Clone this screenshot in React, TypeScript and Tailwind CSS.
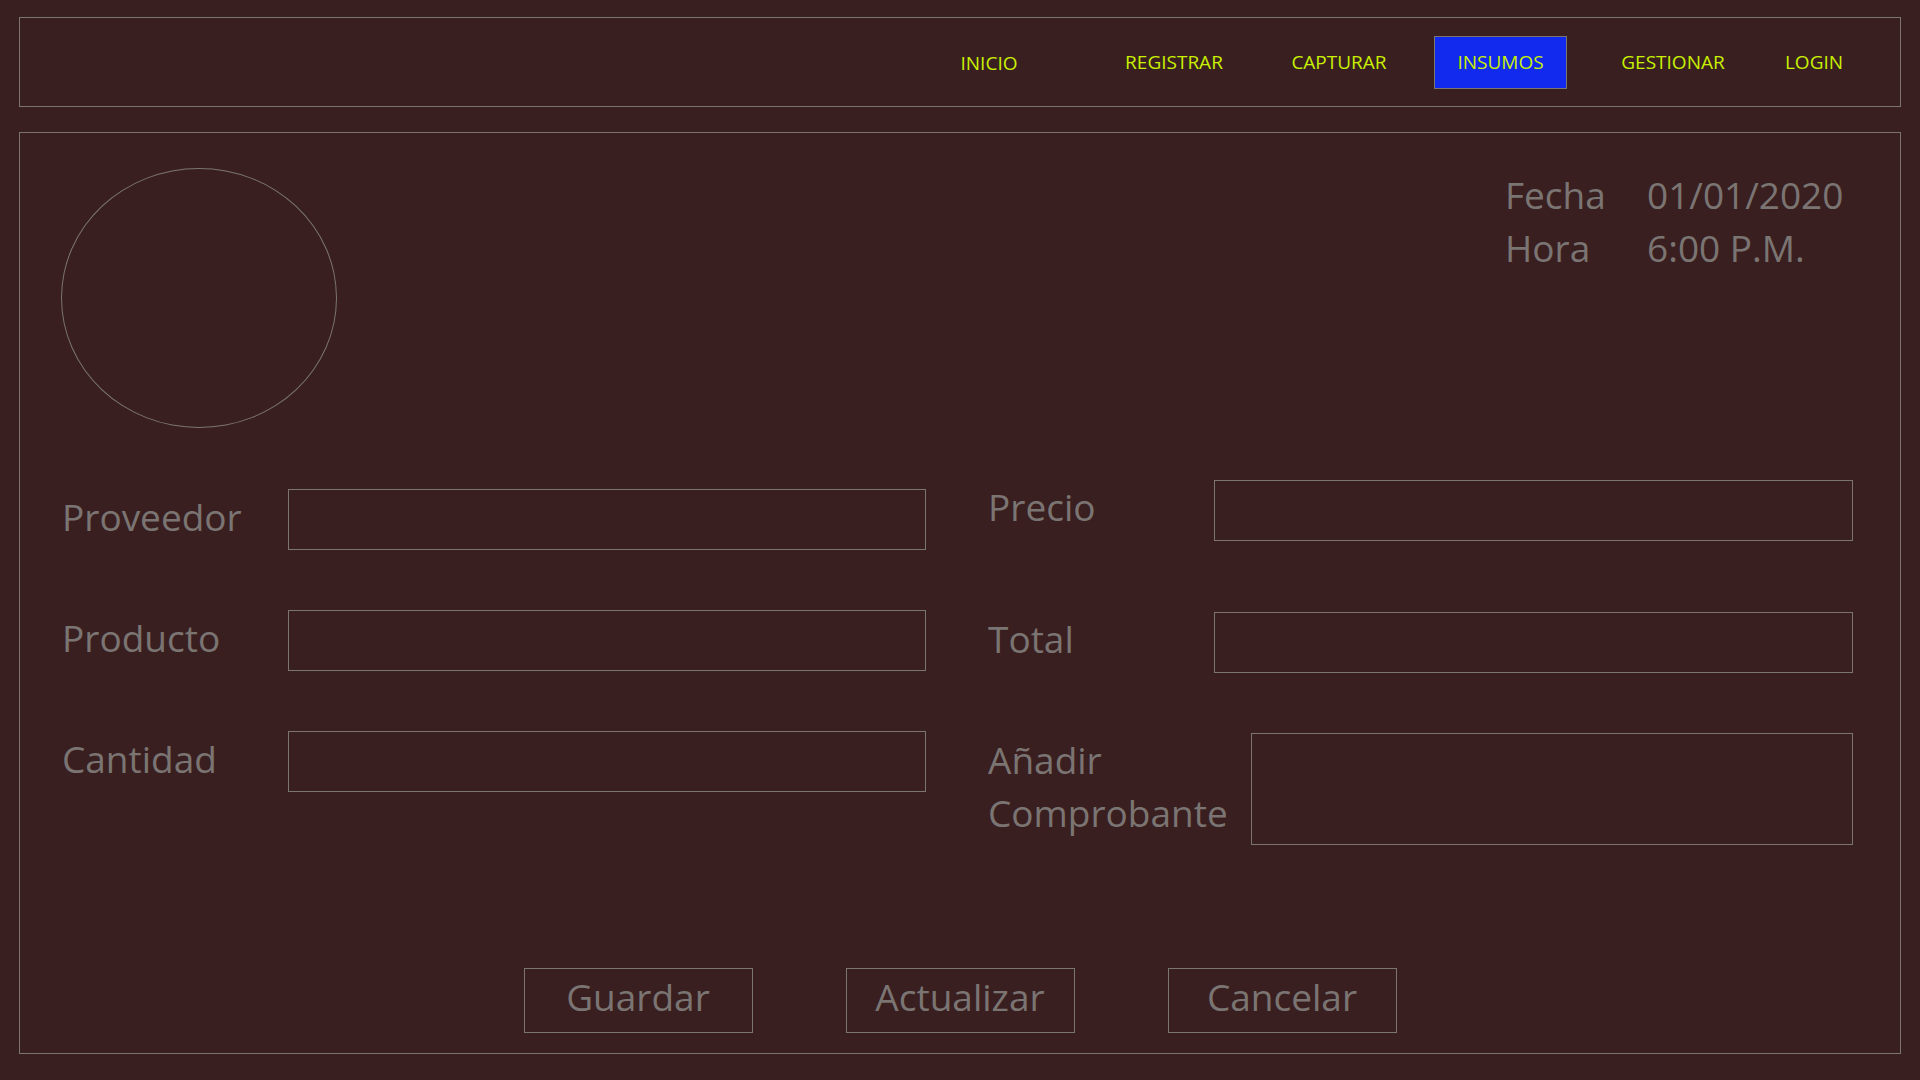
import { useState } from "react";

const NAV = ["INICIO", "REGISTRAR", "CAPTURAR", "INSUMOS", "GESTIONAR", "LOGIN"];

// gap before each nav item (px), kept as full class names for tailwind
const navGap: Record<string, string> = {
  INICIO: "",
  REGISTRAR: "ml-[45px]",
  CAPTURAR: "ml-[25px]",
  INSUMOS: "ml-[25px]",
  GESTIONAR: "ml-[36px]",
  LOGIN: "ml-[1px]",
};

function Field({ label, top }: { label: string; top?: boolean }) {
  return (
    <div className={`flex ${top ? "items-start" : "items-center"}`}>
      <label
        className={`w-[228px] shrink-0 pl-[2px] leading-[53px] ${top ? "" : "mb-[6px]"}`}
      >
        {label}
      </label>
      <input
        type="text"
        className="h-[61px] flex-1 border border-[#7a7573] bg-transparent px-3 text-[28px] text-[#7a7573] outline-none"
      />
    </div>
  );
}

export default function App() {
  const [active] = useState("INSUMOS");

  return (
    <div
      className="min-h-screen bg-[#3a1f20] px-[19px] pt-[17px] text-[#7a7573]"
      style={{ fontFamily: '"Open Sans", "Noto Sans", sans-serif' }}
    >
      {/* header / nav */}
      <header className="flex h-[90px] items-center justify-end border border-[#7a7573] pr-[16px]">
        {NAV.map((item) =>
          item === active ? (
            <span
              key={item}
              className={`${navGap[item]} flex h-[53px] w-[133px] items-center justify-center border border-[#7a7573] bg-[#1229ee] text-[19px] text-[#c8f000]`}
            >
              {item}
            </span>
          ) : (
            <span
              key={item}
              className={`${navGap[item]} w-[140px] text-center text-[19px] text-[#c8f000] ${item === "INICIO" ? "mt-[2px]" : ""}`}
            >
              {item}
            </span>
          )
        )}
      </header>

      {/* main panel */}
      <main className="mt-[25px] flex h-[922px] flex-col border border-[#7a7573] pl-[40px] pr-[47px] pt-[35px] text-[37px]">
        <div className="flex items-start justify-between">
          <div className="ml-[1px] h-[260px] w-[276px] rounded-[50%] border border-[#7a7573]" />
          <div className="-mr-[4px] grid grid-cols-[142px_210px] leading-[53px]">
            <span>Fecha</span>
            <span>01/01/2020</span>
            <span>Hora</span>
            <span>6:00 P.M.</span>
          </div>
        </div>

        <div className="mt-[52px] flex gap-[60px]">
          <div className="mt-[9px] flex w-[866px] flex-col gap-[60px]">
            <Field label="Proveedor" />
            <Field label="Producto" />
            <Field label="Cantidad" />
          </div>

          <div className="flex flex-1 flex-col">
            <Field label="Precio" top />
            <div className="mt-[71px]">
              <Field label="Total" top />
            </div>
            <div className="mt-[60px] flex items-start">
              <label className="w-[265px] shrink-0 pl-[2px] leading-[53px]">
                Añadir
                <br />
                Comprobante
              </label>
              <textarea className="h-[112px] flex-1 resize-none border border-[#7a7573] bg-transparent outline-none" />
            </div>
          </div>
        </div>

        <div className="-mr-[7px] mt-[123px] flex justify-center gap-[93px]">
          {["Guardar", "Actualizar", "Cancelar"].map((b) => (
            <button
              key={b}
              type="button"
              className="h-[65px] w-[229px] border border-[#7a7573] pb-[8px] text-center text-[37px] leading-[53px] text-[#7a7573]"
            >
              {b}
            </button>
          ))}
        </div>
      </main>
    </div>
  );
}
